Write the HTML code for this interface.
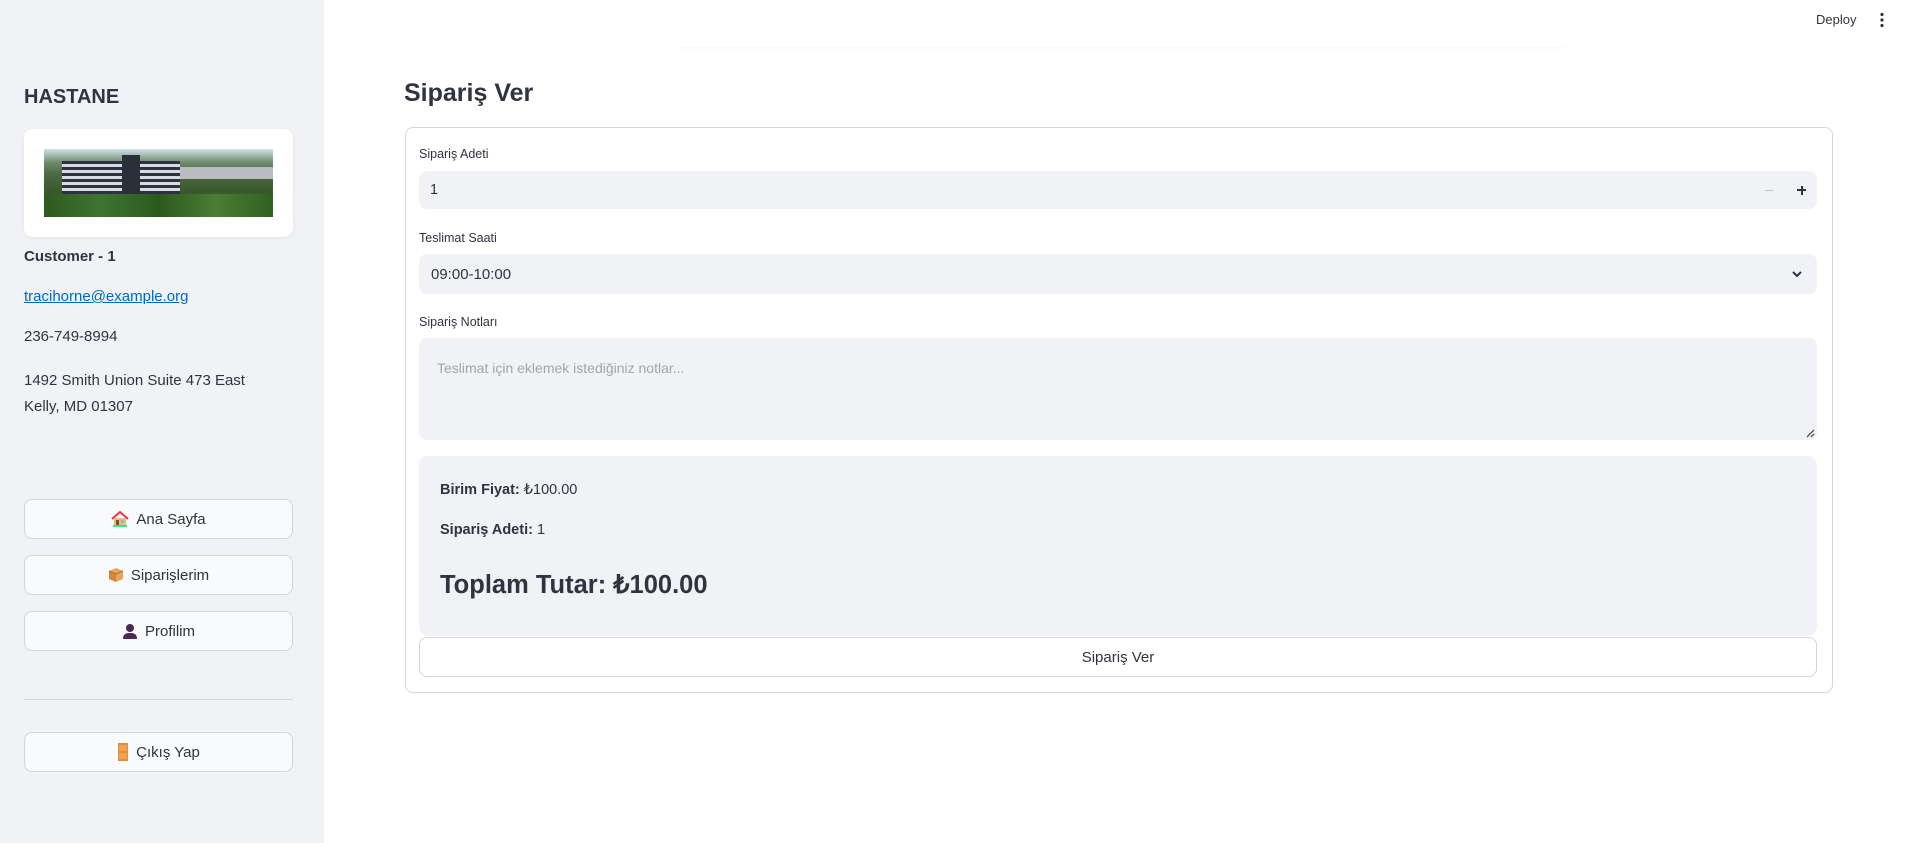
<!DOCTYPE html>
<html><head><meta charset="utf-8">
<style>
*{box-sizing:border-box;margin:0;padding:0}
body{width:1909px;height:843px;overflow:hidden;background:#fff;font-family:"Liberation Sans",sans-serif;color:#31333f;position:relative}
.a{position:absolute}
.sb{left:0;top:0;width:324px;height:843px;background:#f0f2f6}
.btn{position:absolute;left:24px;width:269px;height:40px;border:1px solid #d3d5db;border-radius:8px;background:#f9fafc;display:flex;align-items:center;justify-content:center;font-size:15px;gap:7px}
.lbl{position:absolute;left:419px;font-size:12.5px}
.inp{position:absolute;left:419px;width:1398px;background:#f0f2f6;border-radius:8px}
</style></head><body>
<div class="a sb"></div>
<div class="a" style="left:24px;top:86px;font-size:20px;font-weight:bold">HASTANE</div>
<div class="a" style="left:24px;top:129px;width:269px;height:108px;background:#fff;border-radius:9px;box-shadow:0 1px 4px rgba(0,0,0,.06)"></div>
<div class="a" style="left:44px;top:149px;width:229px;height:68px;overflow:hidden;background:linear-gradient(#cfe3ea 0,#6f8a6a 20%,#4f6b45 35%,#3c5a2f 60%,#2e5b22 100%)">
 <div class="a" style="left:18px;top:12px;width:118px;height:38px;background:repeating-linear-gradient(#2d3240 0 3px,#d8dbe2 3px 6px)"></div>
 <div class="a" style="left:78px;top:6px;width:18px;height:44px;background:#2b2f3a"></div>
 <div class="a" style="left:136px;top:18px;width:93px;height:12px;background:#b9bcc0"></div>
 <div class="a" style="left:0;top:45px;width:229px;height:23px;background:linear-gradient(90deg,#2e5a20,#3f7430,#2c5a1e,#4b7d33,#2f6123)"></div>
</div>
<div class="a" style="left:24px;top:248px;font-size:15px;font-weight:bold">Customer - 1</div>
<div class="a" style="left:24px;top:288px;font-size:15px;color:#0068c9;text-decoration:underline">tracihorne@example.org</div>
<div class="a" style="left:24px;top:328px;font-size:15px">236-749-8994</div>
<div class="a" style="left:24px;top:368px;font-size:15px;line-height:26px">1492 Smith Union Suite 473 East<br>Kelly, MD 01307</div>

<div class="btn" style="top:499px"><svg width="18" height="16" viewBox="0 0 18 16"><path d="M1 8 9 1l8 7" fill="none" stroke="#e34" stroke-width="2"/><rect x="3" y="7" width="12" height="8" fill="#f3b872"/><rect x="5" y="9" width="3" height="6" fill="#8a4b2a"/><rect x="10" y="9" width="3" height="3" fill="#6cc3ef"/><rect x="2" y="14" width="14" height="2" fill="#4d8"/></svg>Ana Sayfa</div>
<div class="btn" style="top:555px"><svg width="16" height="16" viewBox="0 0 16 16"><path d="M8 1 15 4v8l-7 3-7-3V4z" fill="#e8a55a"/><path d="M8 7v8L1 12V4z" fill="#d08a3e"/><path d="M1 4l7 3 7-3" fill="none" stroke="#b46f2a"/></svg>Siparişlerim</div>
<div class="btn" style="top:611px"><svg width="16" height="16" viewBox="0 0 16 16"><circle cx="8" cy="5" r="4" fill="#4a2a55"/><path d="M1 16c0-5 3-6 7-6s7 1 7 6z" fill="#4a2a55"/></svg>Profilim</div>
<div class="a" style="left:24px;top:699px;width:269px;height:1px;background:#d3d5db"></div>
<div class="btn" style="top:732px"><svg width="12" height="18" viewBox="0 0 12 18"><rect x="1" y="0" width="10" height="18" fill="#e08d3c"/><rect x="2" y="2" width="8" height="6" fill="#f0a450"/><rect x="2" y="10" width="8" height="6" fill="#f0a450"/></svg>Çıkış Yap</div>

<div class="a" style="left:673px;top:38px;width:897px;height:8px;box-shadow:0 4px 5px -3px rgba(0,0,0,.06)"></div>
<div class="a" style="left:1816px;top:12px;font-size:13px">Deploy</div>
<svg class="a" style="left:1879px;top:12px" width="6" height="16"><circle cx="3" cy="2.5" r="1.6" fill="#31333f"/><circle cx="3" cy="8" r="1.6" fill="#31333f"/><circle cx="3" cy="13.5" r="1.6" fill="#31333f"/></svg>

<div class="a" style="left:404px;top:79px;font-size:25px;font-weight:bold">Sipariş Ver</div>
<div class="a" style="left:405px;top:127px;width:1428px;height:566px;border:1px solid #d6d7db;border-radius:8px"></div>

<div class="lbl" style="top:147px">Sipariş Adeti</div>
<div class="inp" style="top:171px;height:38px"></div>
<div class="a" style="left:430px;top:182px;font-size:14.5px">1</div>
<div class="a" style="left:1765px;top:190px;width:9px;height:1px;background:#c6c8ce"></div>
<div class="a" style="left:1797px;top:189px;width:9px;height:2px;background:#31333f"></div>
<div class="a" style="left:1800.5px;top:185.5px;width:2px;height:9px;background:#31333f"></div>

<div class="lbl" style="top:231px">Teslimat Saati</div>
<div class="inp" style="top:254px;height:40px"></div>
<div class="a" style="left:431px;top:266px;font-size:15px">09:00-10:00</div>
<svg class="a" style="left:1791px;top:270px" width="12" height="9"><path d="M2 2l4 4 4-4" fill="none" stroke="#31333f" stroke-width="2"/></svg>

<div class="lbl" style="top:315px">Sipariş Notları</div>
<div class="inp" style="top:338px;height:102px"></div>
<div class="a" style="left:437px;top:360px;font-size:14px;color:#a3a5ab">Teslimat için eklemek istediğiniz notlar...</div>
<svg class="a" style="left:1806px;top:429px" width="9" height="9"><path d="M1 8 8 1M5 8 8 5" stroke="#555" stroke-width="1.3"/></svg>

<div class="a" style="left:419px;top:456px;width:1398px;height:180px;background:#f0f2f6;border-radius:9px"></div>
<div class="a" style="left:440px;top:482px;font-size:14.5px"><b>Birim Fiyat:</b> ₺100.00</div>
<div class="a" style="left:440px;top:522px;font-size:14.5px"><b>Sipariş Adeti:</b> 1</div>
<div class="a" style="left:440px;top:570px;font-size:25.5px;font-weight:bold">Toplam Tutar: ₺100.00</div>

<div class="a" style="left:419px;top:637px;width:1398px;height:40px;border:1px solid #d3d5db;border-radius:8px;display:flex;align-items:center;justify-content:center;font-size:15px">Sipariş Ver</div>
</body></html>
